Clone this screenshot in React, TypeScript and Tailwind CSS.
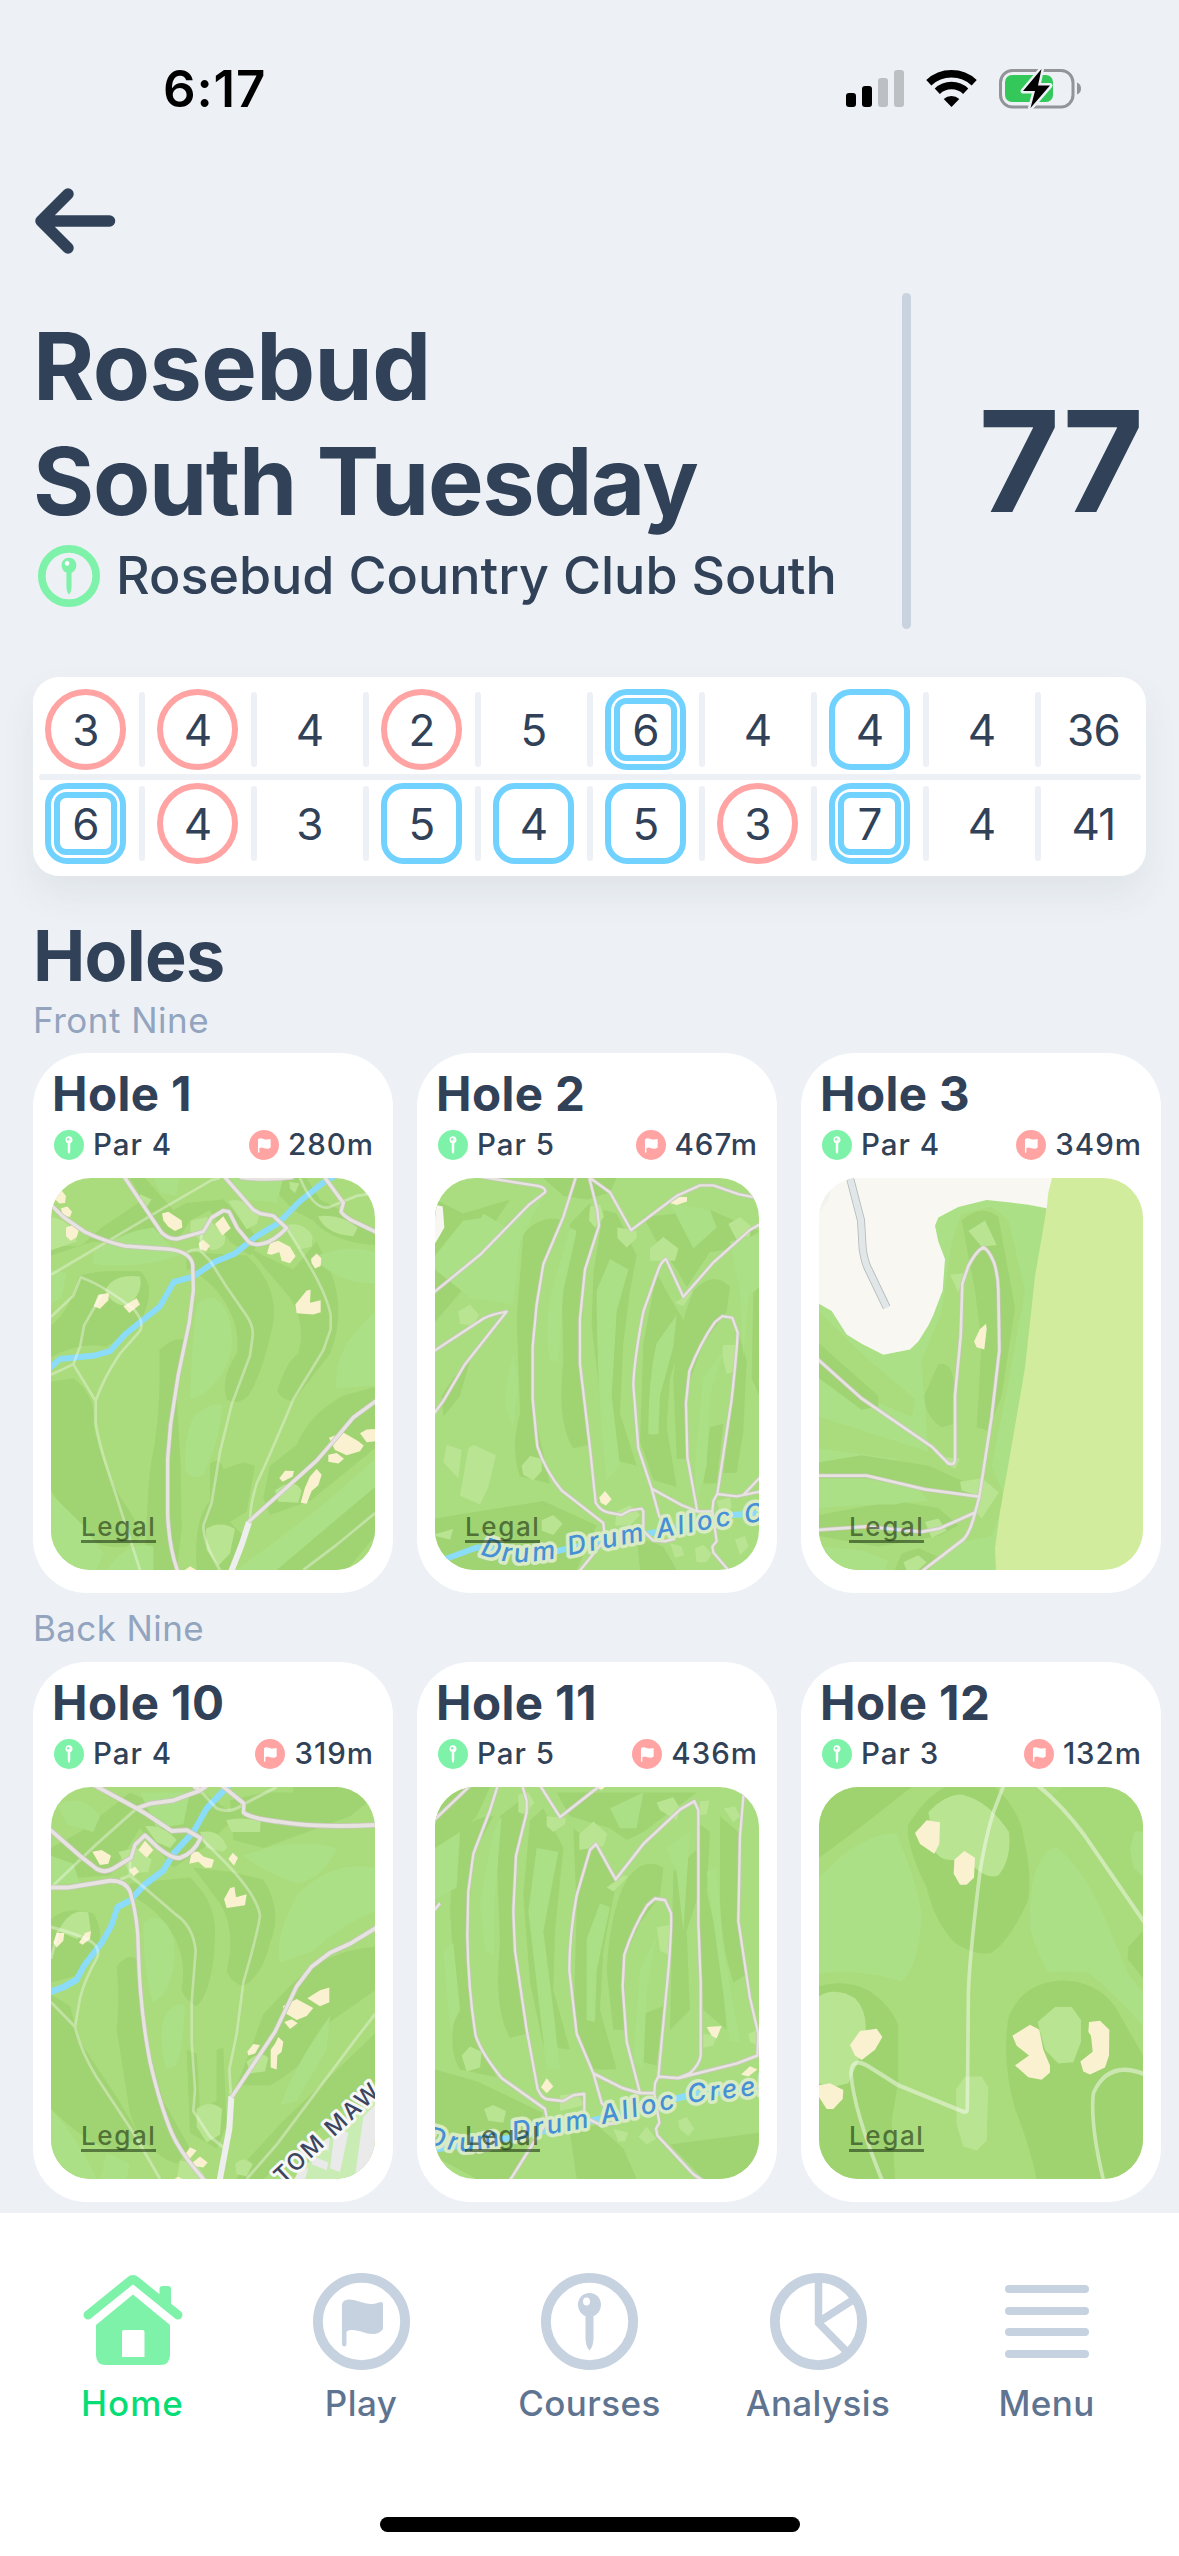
import React from "react";

type Mark = "none" | "birdie" | "bogey" | "double";
type Layer = { kind: "dark" | "mint" | "pale" | "sand" | "fill"; d: string; color?: string };

const TONES = { dark: "#a0d372", mint: "#abe086", pale: "#b9e492", sand: "#f9f1d0", fill: "#ffffff" };

interface HoleMap {
  box: string;
  base: string;
  layers: Layer[];
  water?: string;
  paths?: string;
  roads?: string;
  roadWidth?: number;
  avenue?: string;
  pathWidth?: number;
  label?: { text: string; d: string; tone: "water" | "street"; size: number; spacing: number };
}

const dark = (d: string): Layer => ({ kind: "dark", d });
const mint = (d: string): Layer => ({ kind: "mint", d });
const pale = (d: string): Layer => ({ kind: "pale", d });
const sand = (d: string): Layer => ({ kind: "sand", d });
const fill = (color: string, d: string): Layer => ({ kind: "fill", d, color });

const map1: HoleMap = {
  box: "63 379 972 1118",
  base: "#aadb7c",
  layers: [
    dark("M63 570L150 575L215 520L340 440L375 480L400 545L420 575L285 573L190 560L63 600Z"),
    dark("M300 379L345 379L430 470L470 450L580 440L640 500L690 560L660 600L600 560L540 470L480 500L440 560L395 540Z"),
    dark("M63 800Q120 760 145 660Q190 640 330 645Q385 690 330 790L230 860Q150 845 63 890Z"),
    dark("M63 960L130 950Q200 1000 190 1080Q220 1230 300 1330L340 1400L290 1430Q210 1440 150 1390L63 1270Z"),
    dark("M388 870Q430 830 470 840L440 1000L452 1200L455 1380L440 1497H345Q350 1300 362 1200Q395 1050 388 870Z"),
    dark("M470 590L650 600Q750 690 728 800Q700 930 655 1000Q620 1030 590 1010Q570 950 620 880Q635 790 560 700Q500 640 470 640Z"),
    dark("M650 575L700 600L790 640L860 560L900 640Q950 760 900 880L790 1015Q750 1010 742 985Q770 900 805 880Q830 800 780 720Z"),
    dark("M1035 975L940 1000Q840 1050 800 1140L720 1200L700 1290L720 1340L840 1300L1035 1150Z"),
    dark("M540 1195Q570 1170 580 1210L640 1190L675 1200L650 1330L600 1360L640 1400L600 1497H500Q490 1350 540 1300Z"),
    dark("M690 1497L860 1380L1035 1260V1400L950 1497Z"),
    dark("M700 379H830L870 440L930 470L1035 540V570Q900 560 850 500L790 470Z"),
    mint("M500 740Q560 690 595 770Q625 870 575 940Q520 1010 480 1008Q485 850 500 740Z"),
    mint("M490 1060Q550 1010 578 1030Q570 1130 520 1225Q480 1245 465 1210Q460 1120 490 1060Z"),
    mint("M190 590Q280 530 370 520L450 600Q330 640 190 625Z"),
    mint("M850 605Q950 565 1035 590V680Q920 680 850 605Z"),
    mint("M950 850Q990 800 1035 760V970L920 980Q910 920 950 850Z"),
    mint("M370 379H450L440 430L390 420Z"),
    mint("M600 379H760L740 450L650 440Z"),
    mint("M63 1280L160 1370L220 1450L200 1497H63Z"),
    mint("M230 1497Q290 1410 370 1430V1497Z"),
    mint("M620 1497Q760 1400 880 1310L1035 1180V1260L740 1497Z"),
    mint("M63 640L110 650L95 720L63 740Z"),
    pale("M225 700Q250 650 330 660Q340 700 300 740Q250 750 225 700Z"),
    pale("M483 500L530 490L585 545Q590 580 545 585L480 530Z"),
    pale("M595 445Q640 430 688 485L680 510L650 525Z"),
    pale("M765 515Q820 500 848 545L845 575L810 582Z"),
    pale("M865 488Q930 480 983 520L970 545Q890 540 865 490Z"),
    pale("M735 1270Q790 1230 815 1270L805 1305L745 1302Z"),
    pale("M528 1380Q570 1355 615 1380L600 1450L565 1485L530 1440Z"),
    pale("M63 490Q130 500 140 560L63 585Z"),
    pale("M778 390L808 395L795 422L780 410Z"),
    pale("M330 425L365 440L350 462L330 450Z"),
    sand("M78 425L95 415L108 430L105 450L88 452L76 440Z"),
    sand("M93 465L112 460L126 475L120 490L98 486Z"),
    sand("M108 520L130 512L146 530L140 548L122 558L108 545Z"),
    sand("M396 480L415 475L455 500L457 520L435 530L415 518L400 500Z"),
    sand("M555 510L580 488L602 522L577 543Z"),
    sand("M506 565L520 555L540 572L528 588L510 582Z"),
    sand("M711 595L720 565L745 558L780 575L797 602L780 622L755 615L748 590L725 598Z"),
    sand("M843 610L860 594L874 608L872 630L855 637L845 622Z"),
    sand("M796 740L830 700L842 698L840 735L872 728L872 762L850 768L800 765Z"),
    sand("M191 745L205 712L237 707L235 728L210 752Z"),
    sand("M280 745L320 722L330 740L298 764Z"),
    sand("M465 1497L480 1486L499 1497Z"),
    sand("M897 1120L940 1105L985 1130L1001 1142L990 1158L950 1170L915 1155Z"),
    sand("M990 1107L1010 1096L1035 1095V1130L1010 1133Z"),
    sand("M895 1168L920 1163L942 1180L925 1193L895 1188Z"),
    sand("M748 1235L765 1214L792 1215L788 1230L758 1245Z"),
    sand("M840 1230L860 1209L875 1225L865 1255L845 1272L830 1308L812 1305L825 1262Z"),
  ],
  water: "M55 925L90 895L190 886L240 873L285 825L390 745L432 675L490 660L555 618L612 596L680 545L745 508L810 445L880 392L915 372",
  paths:
    "M63 655L250 550L400 465L545 385L570 379M63 775L130 715L152 662Q220 685 310 752Q345 790 330 815L270 880Q220 950 197 1015V1080Q210 1150 250 1260L330 1497M197 1015L130 910L63 940M130 910L150 860L162 800L215 712M470 592Q490 580 510 585L540 615L590 690L645 765Q672 800 668 830L660 885L605 1025L570 1160L545 1305L520 1370Q520 1420 570 1497M510 585L515 535M770 522L830 615Q890 710 902 770V810L880 870L790 1010Q720 1170 680 1250Q660 1310 660 1360M810 379Q850 470 895 463L980 430L1035 422M820 1497L920 1425L1035 1335",
  roads:
    "M55 448L100 490L165 533Q230 562 285 573L420 582Q480 590 488 625L490 700L478 790L445 940L422 1080L413 1180V1340Q418 1440 445 1505M280 372L370 500L395 535Q415 553 440 553L520 532L545 492L580 472L597 475L622 522L655 560Q670 573 700 566Q730 560 770 522L730 487L690 480L670 470L580 372M880 372L940 450L933 475Q940 485 965 500L1040 534M1045 1010L970 1062L910 1130L860 1185L655 1360M630 377Q710 387 790 377",
  roadWidth: 10,
  avenue: "M657 1360L635 1425L602 1505",
};

const map10: HoleMap = {
  box: "63 486 972 991",
  base: "#aadb7c",
  layers: [
    dark("M63 640L150 600L300 500L380 530L520 500L620 560L520 640L430 690L380 640L330 590L240 710L63 720Z"),
    dark("M63 820Q110 785 190 805Q230 860 190 920L130 965L63 980Z"),
    dark("M63 1010L120 1040L150 1130L260 1270L330 1370L260 1400Q200 1410 63 1300Z"),
    dark("M260 940Q290 905 320 920L340 1100L400 1280L480 1400L440 1440Q330 1400 300 1310L260 1100Q270 1020 260 940Z"),
    dark("M300 730L480 715Q560 780 555 860Q550 1000 500 1040Q470 1030 455 1000Q470 920 430 860Q380 790 300 760Z"),
    dark("M490 690L600 700L700 720Q760 800 720 880Q700 960 640 990Q600 980 590 950Q620 850 570 780Z"),
    dark("M1035 890Q880 900 780 990L700 1060Q650 1180 620 1240L720 1240Q850 1180 900 1080L1035 1000Z"),
    dark("M470 1150L500 1160L510 1300L560 1280V1150L580 1145L590 1340L560 1400L480 1360Z"),
    dark("M640 1440L760 1330L1035 1110V1230L800 1400L700 1477H620Z"),
    dark("M600 520L700 500H790V486L1035 486V510L960 560L700 640L610 620Z"),
    mint("M340 830Q400 790 430 870Q445 950 400 1010L370 1033Q340 970 340 830Z"),
    mint("M400 1070Q440 1020 465 1040Q460 1140 440 1190L410 1200Q385 1140 400 1070Z"),
    mint("M640 660Q780 610 920 640Q880 720 800 730Q700 700 640 660Z"),
    mint("M800 760Q900 670 1035 690V800Q940 830 850 900L750 930Q730 870 800 760Z"),
    mint("M750 1290Q800 1180 900 1065L890 1150L800 1280Z"),
    mint("M80 530Q160 500 210 560L190 600L110 580Z"),
    mint("M330 500H480L460 580L380 590Z"),
    mint("M63 1300Q150 1380 200 1477H63Z"),
    mint("M230 1410L300 1440L290 1477H210Z"),
    mint("M63 660L130 680L150 730H63Z"),
    fill("#c9ecb4", "M790 1477L900 1375L1035 1270V1477Z"),
    fill("#eaeaea", "M915 1350L955 1360L930 1460L900 1450Z"),
    fill("#eaeaea", "M975 1470L1000 1320L1035 1290V1420L1010 1465Z"),
    fill("#eaeaea", "M845 1400L900 1370L895 1405ZM850 1420L895 1435L890 1455L845 1440ZM805 1455L835 1450L825 1477H795Z"),
    pale("M85 850Q120 790 175 803L182 850L140 870Z"),
    pale("M588 570Q630 560 692 572L690 600H605Z"),
    pale("M345 585Q400 580 440 620L420 640L380 625Z"),
    pale("M510 600Q570 590 592 640L580 650L530 640Z"),
    pale("M265 650L320 640L365 670L355 700L300 705Z"),
    pale("M500 1300Q540 1275 576 1300L570 1365L530 1385L500 1345Z"),
    pale("M615 1440Q640 1415 668 1440L650 1470L620 1465Z"),
    pale("M650 1180Q690 1150 715 1170L705 1205L660 1210Z"),
    pale("M450 1430L500 1440L530 1477H440Z"),
    sand("M187 650L215 645L243 660L235 680L210 683Z"),
    sand("M325 645L345 622L370 645L350 665Z"),
    sand("M298 695L315 687L327 700L310 712Z"),
    sand("M478 680L485 650L505 650L520 662L552 670L545 690L525 690L505 675Z"),
    sand("M595 668L608 652L624 665L612 685Z"),
    sand("M582 770L600 742L613 738L618 765L650 757L645 785L590 792Z"),
    sand("M70 880L80 855L103 855L100 875L80 892Z"),
    sand("M147 880L165 855L183 850L180 870L158 885Z"),
    sand("M758 1040L800 1022L850 1045L830 1065L800 1075L770 1060Z"),
    sand("M832 1020L870 1000L898 993L898 1030L870 1040Z"),
    sand("M763 1080L785 1073L803 1083L780 1098Z"),
    sand("M652 1155L670 1136L690 1138L675 1160L655 1165Z"),
    sand("M735 1135L745 1118L760 1130L755 1155L742 1165L740 1200L722 1195V1150Z"),
    sand("M465 1415L480 1397L500 1405L480 1425Z"),
    sand("M488 1435L510 1420L533 1435L520 1448L495 1445Z"),
    sand("M433 1477L445 1471L457 1477Z"),
  ],
  water: "M55 1006L100 992L140 973L162 938L215 880L245 835L262 790L300 773L345 732L400 697L430 655L490 600L530 540L598 480",
  paths:
    "M63 740L200 630L320 540M63 840Q150 860 180 875Q210 890 203 915Q165 970 150 1020L135 1092Q150 1150 200 1220L310 1360L390 1477M63 1030L135 1092M63 920L85 850M270 720L300 710L350 745L440 810Q490 840 497 900L485 1030V1130L495 1250L490 1305L540 1370L580 1397M300 710V665M512 615L590 680Q680 760 690 810Q685 850 640 980L620 1110L598 1200L603 1270M510 495L560 540Q600 555 640 530L740 486M650 1477L740 1390L980 1120L1035 1060",
  roads:
    "M55 740H115L240 723Q285 722 300 750Q325 820 325 900Q330 1050 360 1180Q390 1290 425 1360Q450 1410 525 1482M55 590L150 660L200 693Q225 705 250 692L303 665L315 632L345 608L385 640Q430 670 450 665Q490 655 512 615L470 595L425 597L350 555L320 540L190 480M320 540L360 528L430 520L510 495L530 483M490 484L512 495M575 482L642 528L640 550Q660 565 740 573Q860 590 1040 582M1042 840L960 882L900 905L845 940L800 990L735 1105L605 1270",
  roadWidth: 10,
  avenue: "M604 1268L598 1350L568 1485",
  label: { text: "TOM MAW", d: "M232 398L345 292", tone: "street", size: 23, spacing: 2.6 },
};

const map2: HoleMap = {
  box: "75 379 972 1118",
  base: "#aadd80",
  layers: [
    dark("M75 440L160 480L300 440L230 540L75 640Z"),
    dark("M75 560L200 580L330 480L370 470L210 640L75 790Z"),
    dark("M340 540Q390 480 460 500L400 625L370 860L372 1050L420 1250L330 1230Q300 1150 330 1050L320 780Z"),
    dark("M480 510L540 450L560 520L525 640L510 900L540 1140L490 1150Q440 1080 460 900L455 700Z"),
    dark("M580 470L620 480L680 600L660 700L640 850L630 1050L680 1200L600 1180L570 1000L545 800L550 650Z"),
    dark("M740 650L780 720L830 800L780 950L770 1090L800 1260L730 1240L690 1130L700 850Z"),
    dark("M850 700Q910 640 960 690L950 760L880 850L830 980L835 1180L800 1180L790 950Q800 820 850 700Z"),
    dark("M900 1090L940 1080L920 1250L880 1250Z"),
    dark("M700 490L900 470L1047 530L980 580L900 590L830 690L800 640L740 560Z"),
    dark("M1030 700L1047 690V1000L1025 950Z"),
    dark("M985 820L1010 900L1000 1100L980 1220L940 1220L965 1010Z"),
    dark("M400 379H620L600 420L530 440L460 430Z"),
    dark("M75 1350L400 1300L560 1370L500 1497H75Z"),
    dark("M680 1400L760 1430L800 1497H690Z"),
    dark("M95 1000L130 950L180 900L150 1000L100 1060Z"),
    mint("M75 640L180 560L220 480L290 520L400 430L330 560L310 740L180 720Z"),
    mint("M75 600L160 500L240 490L180 570L75 640Z"),
    mint("M420 720L480 520L500 530L460 700L445 900L420 900Q405 820 420 720Z"),
    mint("M560 700L600 610L655 640L620 760L605 1000L630 1200L590 1240Q560 1000 560 700Z"),
    mint("M740 850L800 770L790 860L750 1000L745 1110L715 1110Q715 950 740 850Z"),
    mint("M880 950L940 870L900 1000L890 1200L860 1310L855 1200Z"),
    mint("M290 960L310 880L325 960L310 1090L285 1030Z"),
    mint("M780 450L900 470L920 520L850 580Z"),
    mint("M960 560L1047 540V690L1015 720L1000 890L990 700Z"),
    pale("M110 1140L155 1155L145 1235L100 1190Z"),
    pale("M190 1140L258 1170L235 1260L210 1310L150 1285L175 1150Z"),
    pale("M145 760L180 740L207 770L190 800L150 795Z"),
    pale("M335 1200L360 1172L395 1180V1215L370 1242L340 1225Z"),
    pale("M395 1355L430 1340L458 1365L430 1397L395 1385Z"),
    pale("M540 460L570 455L582 490L555 520L537 500Z"),
    pale("M622 520L680 530L680 550L650 577L622 550Z"),
    pale("M720 580L760 547L805 580L795 615H720Z"),
    pale("M955 510L990 490L1022 515L1020 545L980 555Z"),
    pale("M938 855H975V930L950 938L938 890Z"),
    pale("M795 735L850 700L820 745Z"),
    pale("M620 1330L660 1312L690 1340L660 1370H615Z"),
    pale("M855 1435L880 1425L905 1450L890 1475H860Z"),
    pale("M975 1410L1005 1400L1015 1430L990 1455Z"),
    pale("M780 1420L815 1430L822 1455L795 1462Z"),
    pale("M75 1395L130 1380L120 1410L75 1400Z"),
    pale("M920 1300L960 1290L965 1320L930 1330Z"),
    fill("#f8f6f0", "M75 455L98 460L103 520L85 550L75 566Z"),
    sand("M780 450L808 433H831V446L800 456Z"),
    sand("M568 1290L585 1272L605 1295L588 1313L572 1305Z"),
  ],
  water: "M85 1473L200 1433L260 1435L370 1460L490 1432L760 1385L960 1340L1055 1335",
  roads:
    "M215 376L385 402Q410 408 405 420L355 457L210 598L68 708M68 875L220 780Q245 767 290 760L165 910L100 1015L68 1056M499 372L460 490L400 625L380 740L368 860V1010L382 1145Q410 1220 455 1270L580 1363L585 1410L507 1502M536 372L562 470L567 515L525 640L510 780V910L540 1150L557 1305Q570 1328 595 1333L635 1340L660 1327L695 1322L700 1330V1385L730 1413L765 1415L795 1408M536 376L600 420L663 528L800 430L870 400H910L985 425L1055 438M1055 508L1020 527L910 620L820 718L768 610Q755 615 745 640L700 760Q672 900 670 970L685 1150L725 1265L748 1345L795 1390M725 1265L815 1312L862 1330H907L910 1300L922 1280L965 1010Q980 880 983 820L967 778L937 773L915 790Q870 850 838 930L828 1020L832 1175L862 1330M922 1280L980 1287L1055 1272M1000 1283L1055 1228M907 1330L920 1415L907 1430L910 1447L960 1503",
  roadWidth: 7,
  label: {
    text: "Drum Drum Alloc Creek",
    d: "M45 376Q70 386 90 384Q120 382 142 376L213 362L302 346L420 334",
    tone: "water",
    size: 26,
    spacing: 3.2,
  },
};

const map11: HoleMap = {
  box: "75 486 972 991",
  base: "#aadd80",
  layers: [
    dark("M130 620Q180 560 250 560L190 655L172 860L190 1100L260 1220L150 1200Q110 1150 140 1050L120 800Z"),
    dark("M270 560L330 520L345 560L318 660L312 900L350 1110L300 1120Q250 1050 270 880L262 700Z"),
    dark("M360 570L400 540L460 640L435 850L430 1000L480 1150L400 1140L360 980L340 760Z"),
    dark("M490 590L560 640L620 720L580 900L570 1050L620 1200L550 1200L490 1080L500 800Z"),
    dark("M650 720Q700 660 760 690L750 760L690 830L640 920L650 1100L610 1100L590 950Q600 800 650 720Z"),
    dark("M870 580L900 600L890 750L930 900L950 1100L880 1050L868 800Z"),
    dark("M930 560L985 600V820L1010 960L970 980Q930 880 930 750Z"),
    dark("M700 1060L760 1040L740 1190L690 1180Z"),
    dark("M790 700L865 640V760L830 850L840 1050L780 1100Z"),
    dark("M75 1200L200 1230L400 1310L350 1400L300 1477H200L75 1420Z"),
    dark("M480 1360L560 1340L640 1400L680 1477H500Z"),
    dark("M75 540L150 486H240L200 560L110 640L75 720Z"),
    dark("M440 500H860L700 600L650 620L600 590L480 560Z"),
    dark("M780 1390L1047 1360V1477H880Z"),
    mint("M210 780L250 600L275 560L255 760L252 910L225 900Z"),
    mint("M355 800L380 640L445 650L400 850L430 1050L450 1200L410 1200Z"),
    mint("M530 870L570 780L600 790L560 950L555 1080L530 1075Z"),
    mint("M690 950L740 860L710 1000L700 1200L670 1180Z"),
    mint("M100 900L130 880L150 1050L120 1100Z"),
    mint("M75 640L150 600L140 740L75 770Z"),
    mint("M770 640L840 600L830 720L820 850L800 700Z"),
    mint("M890 700L920 690L940 900L990 1130L960 1130Z"),
    mint("M600 540L700 500L680 590L630 590Z"),
    pale("M155 1165L180 1142L215 1155L210 1195L170 1205Z"),
    pale("M325 505L355 500L373 525L345 555L325 550Z"),
    pale("M410 560L468 565L465 580L430 600L410 585Z"),
    pale("M508 605L550 573L592 605L580 635L508 645Z"),
    pale("M740 525L790 512L810 540L800 570L750 545Z"),
    pale("M870 522L898 520L890 555L866 558Z"),
    pale("M942 540L975 535L990 560L970 575Z"),
    pale("M740 840L780 835L775 910L750 900Z"),
    pale("M590 740L640 710L655 712L610 750Z"),
    pale("M222 1300L250 1290L288 1305L280 1335L235 1330Z"),
    pale("M450 1265L500 1260L525 1290L450 1305Z"),
    pale("M685 1370L710 1345L738 1375L710 1390Z"),
    pale("M805 1330L830 1320L853 1350L835 1368L808 1350Z"),
    pale("M880 1110L920 1115L910 1140L880 1145Z"),
    pale("M1015 1110L1045 1100V1140L1020 1130Z"),
    pale("M610 1350L655 1360L645 1382H625Z"),
    sand("M560 486H585L575 493L560 490Z"),
    sand("M393 1245L410 1222L430 1243L410 1260Z"),
    sand("M890 1093L935 1090L920 1122L905 1115Z"),
    sand("M993 1213L1020 1192L1042 1200L1015 1218Z"),
  ],
  water: "M68 1402L290 1375L600 1320L850 1262L1055 1250",
  roads:
    "M68 573L180 483M264 480L240 545L190 655L175 750L172 860Q175 1000 197 1115Q215 1160 275 1222L405 1300L412 1330L297 1484M68 802L90 780M336 480L350 520V550L318 660L310 800L315 900L350 1100L383 1250Q395 1272 410 1275L460 1280L490 1265L523 1262V1320L570 1340L620 1335M390 482L450 562L565 486M550 1210L640 1248L690 1260H733L735 1235L745 1218L775 950Q785 850 783 805L765 772L735 768L712 785Q670 840 643 910L638 990L650 1130L690 1260M745 1218L805 1222L840 1210Q870 1185 872 1165V980L865 830V545L853 522L810 543L700 630L617 720L558 630L540 645L500 760Q478 860 478 950L500 1110L550 1210L575 1285L610 1312M805 1222L980 1185L1042 1165L1045 1110L1020 1020L985 825L990 610L1002 490M733 1260L748 1335L738 1350L742 1367L850 1465L880 1482",
  roadWidth: 7,
  label: {
    text: "Drum Drum Alloc Creek",
    d: "M-10 357L20 364Q45 366 82 353L157 340L173 336L245 320L262 315L330 307L420 300",
    tone: "water",
    size: 26,
    spacing: 3.2,
  },
};

const map3: HoleMap = {
  box: "72 379 972 1118",
  base: "#f8f7f2",
  layers: [
    fill("#abe086", "M755 465L700 455L640 448L575 442L490 462L430 492L420 515L430 560L450 610L443 700L415 770L400 800L370 845L345 868L265 883L200 852L155 825L110 758L72 738V1497H640Z"),
    fill("#aadb7c", "M500 480L590 462L640 500L690 700L640 960L590 1200L630 1290L590 1400L480 1420L400 1497H72V1320L400 1300L300 1180L72 1150V1060L400 1160L380 900L440 760L470 560Z"),
    fill("#aadb7c", "M72 760L200 880L360 1010L350 1060L100 960L72 930Z"),
    dark("M500 500Q560 450 610 490L660 750L620 1000L580 1100L545 1090L560 850L540 700Z"),
    dark("M430 910Q480 900 478 1000V1080L440 1090Q390 1060 388 1000Z"),
    dark("M72 850L130 900L250 1000L250 1030L200 1040L72 950Z"),
    dark("M72 1190L200 1170L400 1200L520 1250L550 1290L390 1270L215 1235H72Z"),
    dark("M72 1340L300 1300L430 1320L490 1370L430 1400L250 1430L72 1400Z"),
    dark("M300 1497L320 1450L370 1435L430 1460L400 1497Z"),
    mint("M72 1260L280 1260L400 1290L300 1310H72Z"),
    mint("M72 1430L200 1440L280 1470L270 1497H72Z"),
    pale("M520 530L570 500L605 570L560 575Z"),
    pale("M465 655L510 650L490 705Z"),
    pale("M495 1245L560 1235L612 1275L560 1350L540 1330L550 1285L500 1270Z"),
    pale("M390 1360L430 1350L455 1385L410 1405Z"),
    pale("M325 1475L370 1455L395 1475L370 1497H335Z"),
    pale("M445 1175L495 1180L480 1208L455 1195Z"),
    fill("#f2f2ee", "M72 379H120L100 440L72 480Z"),
    fill("#d2ec9d", "M771 379H1044V1497H603L600 1435L615 1330L645 1170L690 920L720 660L755 465L760 420Z"),
    sand("M573 795L575 810L568 868L545 862L537 845L555 810Z"),
  ],
  roads:
    "M65 893L200 1008L410 1145L460 1193Q480 1200 480 1180V1000L497 830L502 680L520 630Q545 585 565 577Q580 582 597 620Q610 660 610 700L613 870L590 1060L553 1288L540 1335Q525 1390 505 1410L380 1501M65 1228H215L390 1267L553 1288M65 1383L215 1373L380 1388L435 1378L540 1333",
  roadWidth: 8,
  avenue: "M165 379L198 500L203 580Q208 615 218 635L275 748",
};

const map12: HoleMap = {
  box: "72 486 972 991",
  base: "#aadb7c",
  layers: [
    fill("#9ed370", "M72 486H350L200 585L72 665Z"),
    fill("#a6d977", "M805 486H1044V830L900 640L770 510Z"),
    fill("#9ed370", "M370 545Q400 510 450 486H600Q680 550 687 620Q710 700 700 770Q650 870 590 905Q540 915 480 880Q420 830 395 740Q330 630 340 580Z"),
    fill("#9ed370", "M72 990Q150 970 220 1000Q290 1040 310 1090V1230L290 1330L300 1477H72Z"),
    fill("#9ed370", "M640 1070Q680 980 800 975Q900 975 960 1040L1044 1165V1477H725Q700 1380 660 1300Q620 1180 640 1070Z"),
    fill("#9ed370", "M1044 850L1000 890L998 920L1044 970Z"),
    mint("M72 715Q200 600 305 603Q380 760 380 820Q370 940 320 978Q200 945 72 957Z"),
    mint("M720 700Q750 640 785 638Q880 700 950 860L1000 960L1044 1005V1090Q960 1010 880 955Q800 950 760 955Q720 900 705 840Q700 760 720 700Z"),
    mint("M1044 600L1020 597L1005 640L1015 690L1044 712Z"),
    pale("M400 550Q450 505 500 505Q580 520 642 600Q650 670 610 710Q580 720 540 690L480 670Q440 675 420 650Z"),
    pale("M72 1015Q120 990 180 1020Q215 1050 212 1100L190 1180L160 1235L110 1245L72 1235Z"),
    pale("M728 1080L780 1042L830 1042L858 1075V1130L835 1182L790 1185L750 1150Z"),
    pale("M483 1250L510 1218H560L580 1245L575 1380L545 1405L505 1395L485 1340Z"),
    sand("M360 602L395 570L435 575L433 630L418 655L375 630Z"),
    sand("M478 670L508 648L540 665L537 715L515 733H495L476 705Z"),
    sand("M165 1138L195 1103L245 1097L262 1118L240 1150L200 1176L180 1165Z"),
    sand("M72 1240L105 1235L145 1252L143 1275L115 1300H95L72 1270Z"),
    sand("M652 1115L705 1087L733 1100L745 1150L765 1190V1208L740 1226L700 1220L660 1190L702 1165L665 1140Z"),
    sand("M882 1080L915 1077L943 1100L942 1165L930 1195L885 1213L865 1205L856 1180L893 1155L888 1115L880 1105Z"),
  ],
  paths:
    "M627 480L595 550Q570 620 555 700Q520 940 520 1020L517 1298Q517 1312 500 1305L310 1240L225 1195Q170 1165 168 1210Q175 1300 262 1482M728 482Q800 530 870 610L1048 828M1048 1212Q940 1175 895 1260Q885 1340 926 1482",
  pathWidth: 11,
};

function MapTile({ map, id }: { map: HoleMap; id: string }) {
  const isStreet = map.label?.tone === "street";
  return (
    <div className="relative mx-[18px] h-[392px] w-[324px] overflow-hidden rounded-[40px]">
      <svg className="block h-full w-full" viewBox={map.box} preserveAspectRatio="none" style={{ background: map.base }}>
        {map.layers.map((l, i) => (
          <path key={i} d={l.d} fill={l.color ?? TONES[l.kind]} />
        ))}
        <g fill="none" strokeLinejoin="round">
          {map.water && <path d={map.water} stroke="#8bdcf9" strokeWidth={17} />}
          {map.paths && <path d={map.paths} stroke="#ffffff" strokeOpacity={map.pathWidth ? 0.45 : 0.35} strokeWidth={map.pathWidth ?? 8} />}
          {map.avenue && id === "3" && <path d={map.avenue} stroke="#b4b9b9" strokeWidth={24} />}
          {map.avenue && <path d={map.avenue} stroke={id === "3" ? "#e1e7e8" : "#eeeeef"} strokeWidth={id === "3" ? 19 : 18} />}
          {map.roads && <path d={map.roads} stroke="#c9c6bd" strokeWidth={(map.roadWidth ?? 8) + 4} />}
          {map.roads && <path d={map.roads} stroke="#e6e3e0" strokeWidth={map.roadWidth ?? 8} />}
        </g>
      </svg>
      {map.label && (
        <svg className="absolute inset-0" width="324" height="392" viewBox="0 0 324 392">
          <path id={`label-${id}`} d={map.label.d} fill="none" />
          <text
            fontFamily="Inter, sans-serif"
            fontSize={map.label.size}
            fontWeight={500}
            fontStyle={isStreet ? "normal" : "italic"}
            letterSpacing={map.label.spacing}
            fill={isStreet ? "#3a4560" : "#4590d6"}
            stroke={isStreet ? "#f7f7f7" : "#d8ebc4"}
            strokeWidth={isStreet ? 6 : 7}
            strokeLinejoin="round"
            paintOrder="stroke"
          >
            <textPath href={`#label-${id}`}>{map.label.text}</textPath>
          </text>
        </svg>
      )}
      <span className="absolute bottom-[27px] left-[30px] border-b-[3px] border-[#20381599] text-[26px] leading-[26px] font-medium tracking-[1.6px] text-[#203815a6]">
        Legal
      </span>
    </div>
  );
}

const TEE = (
  <>
    <path d="M48.5 20C55.5 20 60 25.5 60 31.5C60 37 56.5 42 52.5 43V66Q52 74 48.5 77.5Q45 74 44.5 66V43C40.5 42 37 37 37 31.5C37 25.5 41.5 20 48.5 20Z" />
  </>
);
const FLAG =
  "M29 31.5Q29.500 27 36 26.500C44 26.500 50 31 58 31C63 31 65 29.500 68 29Q70 29 70 31V56C68 59 64 61 60 61C52 61 46 56.500 38 57Q34 57.500 33.500 59V71Q33.500 73.500 31.300 73.500Q29 73.500 29 71Z";

function TeeRing({ size, color, ring }: { size: number; color: string; ring: number }) {
  return (
    <svg width={size} height={size} viewBox="0 0 97 97" fill={color}>
      <circle cx="48.5" cy="48.5" r={48.5 - ring / 2} fill="none" stroke={color} strokeWidth={ring} />
      {TEE}
      <ellipse cx="45.500" cy="28.500" rx="3.500" ry="4" fill="#ffffff" />
    </svg>
  );
}

function TeeBadge() {
  return (
    <svg width="30" height="30" viewBox="0 0 97 97" fill="#ffffff">
      <circle cx="48.5" cy="48.5" r="48.5" fill="#7ef2a8" />
      {TEE}
      <circle cx="46" cy="30" r="4" fill="#7ef2a8" />
    </svg>
  );
}

function FlagBadge() {
  return (
    <svg width="30" height="30" viewBox="0 0 97 97">
      <circle cx="48.5" cy="48.5" r="48.5" fill="#ffa3a3" />
      <path d={FLAG} fill="#ffffff" />
    </svg>
  );
}

function HoleCard({ hole, par, length, map }: { hole: number; par: number; length: number; map: HoleMap }) {
  return (
    <article className="h-[540px] w-[360px] shrink-0 rounded-[54px] bg-white pt-[13px]">
      <h3 className="pl-[19px] text-[47.5px] leading-[56px] font-bold tracking-[0.4px]">Hole {hole}</h3>
      <div className="mb-[16px] flex h-[40px] items-center justify-between pt-[5px] pr-[19px] pl-[21px] text-[29.5px] font-medium tracking-[1px]">
        <div className="flex items-center gap-[9px]">
          <TeeBadge />
          <span>Par {par}</span>
        </div>
        <div className="flex items-center gap-[9px]">
          <FlagBadge />
          <span>{length}m</span>
        </div>
      </div>
      <MapTile map={map} id={String(hole)} />
    </article>
  );
}

function ScoreCell({ value, mark }: { value: number; mark: Mark }) {
  const digit = <span className="text-[44px] leading-none tracking-[-0.8px]">{value}</span>;
  if (mark === "birdie")
    return <div className="flex size-[81px] items-center justify-center rounded-full border-[6px] border-[#ffa3a3]">{digit}</div>;
  if (mark === "bogey")
    return <div className="flex size-[81px] items-center justify-center rounded-[22px] border-[6px] border-[#71d1ff]">{digit}</div>;
  if (mark === "double")
    return (
      <div className="flex size-[81px] items-center justify-center rounded-[22px] border-[6px] border-[#71d1ff]">
        <div className="flex size-[63px] shrink-0 items-center justify-center rounded-[12px] border-[6px] border-[#71d1ff]">{digit}</div>
      </div>
    );
  return <div className="flex size-[81px] items-center justify-center">{digit}</div>;
}

function ScoreRow({ scores }: { scores: [number, Mark][] }) {
  return (
    <div className="flex h-[81px] items-center">
      {scores.map(([v, m], i) => (
        <React.Fragment key={i}>
          {i > 0 && <div className="mx-[12.5px] h-[75px] w-[6px] shrink-0 rounded-full bg-[#edf1f6]" />}
          <ScoreCell value={v} mark={m} />
        </React.Fragment>
      ))}
    </div>
  );
}

const OUT: [number, Mark][] = [
  [3, "birdie"], [4, "birdie"], [4, "none"], [2, "birdie"], [5, "none"],
  [6, "double"], [4, "none"], [4, "bogey"], [4, "none"], [36, "none"],
];
const IN: [number, Mark][] = [
  [6, "double"], [4, "birdie"], [3, "none"], [5, "bogey"], [4, "bogey"],
  [5, "bogey"], [3, "birdie"], [7, "double"], [4, "none"], [41, "none"],
];

function StatusBar() {
  return (
    <header className="flex h-[176px] items-center justify-between pr-[83px] pl-[163px] text-black">
      <span className="text-[51px] leading-none font-semibold tracking-[0.85px]">6:17</span>
      <svg width="260" height="65" viewBox="0 0 260 65">
        <rect x="10" y="37" width="10" height="14" rx="3" />
        <rect x="26" y="30" width="10" height="21" rx="3" />
        <rect x="42" y="22" width="10" height="29" rx="3" fill="#bcc0c3" />
        <rect x="58" y="14" width="10" height="37" rx="3" fill="#bcc0c3" />
        <g fill="none" stroke="#000" strokeWidth="7.500">
          <path d="M92.800 26.700A33.300 33.300 0 0 1 138.200 26.700" />
          <path d="M101.300 35.300A20.600 20.600 0 0 1 129.700 35.300" />
        </g>
        <path d="M115.500 51L107.700 43A11.500 11.500 0 0 1 123.300 43Z" />
        <rect x="164.500" y="14.500" width="72.500" height="36.500" rx="12" fill="none" stroke="#929497" strokeWidth="3" />
        <path d="M241 26.500Q245 28 245 32.500Q245 37 241 38.500Z" fill="#929497" />
        <rect x="169" y="19" width="48" height="27" rx="7" fill="#34c85a" />
        <path d="M205.500 13L187 35H199L194.500 52L214 29.500H202Z" fill="#000" stroke="#edf1f6" strokeWidth="5" strokeLinejoin="round" paintOrder="stroke" />
      </svg>
    </header>
  );
}

const ring = <circle cx="48.500" cy="48.500" r="43.600" fill="none" stroke="#c6d2df" strokeWidth="9.800" />;

function TabItem({ label, active, children }: { label: string; active?: boolean; children: React.ReactNode }) {
  return (
    <div className="flex w-[228.5px] flex-col items-center">
      <div className="flex h-[97px] items-center justify-center">{children}</div>
      <span
        className={
          active
            ? "mt-[11px] text-[35px] leading-[44px] font-medium tracking-[1px] text-[#07dd75]"
            : "mt-[11px] text-[35px] leading-[44px] font-medium tracking-[0.4px] text-[#5f7490]"
        }
      >
        {label}
      </span>
    </div>
  );
}

function TabBar() {
  return (
    <nav className="flex h-[343px] flex-col items-center bg-white">
      <div className="flex pt-[60px]">
        <TabItem label="Home" active>
          <svg width="100" height="97" viewBox="0 0 100 97">
            <path d="M5 42L47 8Q50 5.500 53 8L95 42" fill="none" stroke="#7ef2a8" strokeWidth="9" strokeLinecap="round" />
            <path d="M76.500 28V16Q76.500 13 79.500 13H85Q88 13 88 16V37Z" fill="#7ef2a8" />
            <path fillRule="evenodd" d="M50 21.500L87 52V82Q87 92 77 92H23Q13 92 13 82V52ZM39 59Q39 57 41 57H59.500Q61.500 57 61.500 59V84H39Z" fill="#7ef2a8" />
          </svg>
        </TabItem>
        <TabItem label="Play">
          <svg width="97" height="97" viewBox="0 0 97 97">
            {ring}
            <path d={FLAG} fill="#c6d2df" />
          </svg>
        </TabItem>
        <TabItem label="Courses">
          <TeeRing size={97} color="#c6d2df" ring={9.8} />
        </TabItem>
        <TabItem label="Analysis">
          <svg width="97" height="97" viewBox="0 0 97 97">
            {ring}
            <path d="M48.500 6V50L78 80M48.500 49L86 25" fill="none" stroke="#c6d2df" strokeWidth="7.500" />
          </svg>
        </TabItem>
        <TabItem label="Menu">
          <div className="flex w-[84px] flex-col gap-[13.5px]">
            <div className="h-[8px] rounded-full bg-[#c6d2df]" />
            <div className="h-[8px] rounded-full bg-[#c6d2df]" />
            <div className="h-[8px] rounded-full bg-[#c6d2df]" />
            <div className="h-[8px] rounded-full bg-[#c6d2df]" />
          </div>
        </TabItem>
      </div>
      <div className="mt-[92px] h-[15px] w-[420px] rounded-full bg-black" />
    </nav>
  );
}

export default function App() {
  return (
    <div className="h-[2556px] w-[1179px] overflow-hidden bg-[#edf1f6] font-['Inter',sans-serif] text-[#304158]">
      <main className="h-[2213px] overflow-hidden">
        <StatusBar />
        <div className="flex h-[90px] items-center pl-[33px]">
          <svg width="84" height="70" viewBox="0 0 84 70" fill="none" stroke="#304158" strokeWidth="11.500" strokeLinecap="round" strokeLinejoin="round">
            <path d="M35 8L8 35L35 62M10 35H76.500" />
          </svg>
        </div>
        <section className="mt-[27px] flex h-[336px]">
          <div className="w-[902px] pt-[16px] pl-[33px]">
            <h1 className="text-[93.5px] leading-[115px] font-bold whitespace-nowrap">
              <span className="block tracking-[-0.6px]">Rosebud</span>
              <span className="block tracking-[-1.3px]">South Tuesday</span>
            </h1>
            <div className="flex h-[74px] items-center gap-[16px] pl-[5px]">
              <TeeRing size={62} color="#7ef2a8" ring={12} />
              <span className="text-[52px] leading-none font-medium">Rosebud Country Club South</span>
            </div>
          </div>
          <div className="w-[9px] rounded-full bg-[#c8d3df]" />
          <div className="flex flex-1 items-center justify-end pr-[35px] text-[140px] leading-none font-bold">77</div>
        </section>
        <section className="mx-[33px] mt-[48px] flex h-[199px] flex-col justify-center rounded-[26px] bg-white pl-[12px] shadow-[0_18px_36px_rgba(50,70,60,0.07)]">
          <ScoreRow scores={OUT} />
          <div className="my-[3.5px] -ml-[6px] h-[6px] w-[1102px] rounded-full bg-[#edf1f6]" />
          <ScoreRow scores={IN} />
        </section>
        <h2 className="mt-[44px] pl-[33px] text-[70px] leading-[71px] font-bold tracking-[-0.7px]">Holes</h2>
        <p className="h-[62px] pl-[33px] text-[35px] leading-[58px] tracking-[0.5px] text-[#92a4be]">Front Nine</p>
        <div className="flex gap-[24px] pl-[33px]">
          <HoleCard hole={1} par={4} length={280} map={map1} />
          <HoleCard hole={2} par={5} length={467} map={map2} />
          <HoleCard hole={3} par={4} length={349} map={map3} />
        </div>
        <p className="h-[69px] pl-[33px] text-[35px] leading-[71px] tracking-[0.4px] text-[#92a4be]">Back Nine</p>
        <div className="flex gap-[24px] pl-[33px]">
          <HoleCard hole={10} par={4} length={319} map={map10} />
          <HoleCard hole={11} par={5} length={436} map={map11} />
          <HoleCard hole={12} par={3} length={132} map={map12} />
        </div>
      </main>
      <TabBar />
    </div>
  );
}
